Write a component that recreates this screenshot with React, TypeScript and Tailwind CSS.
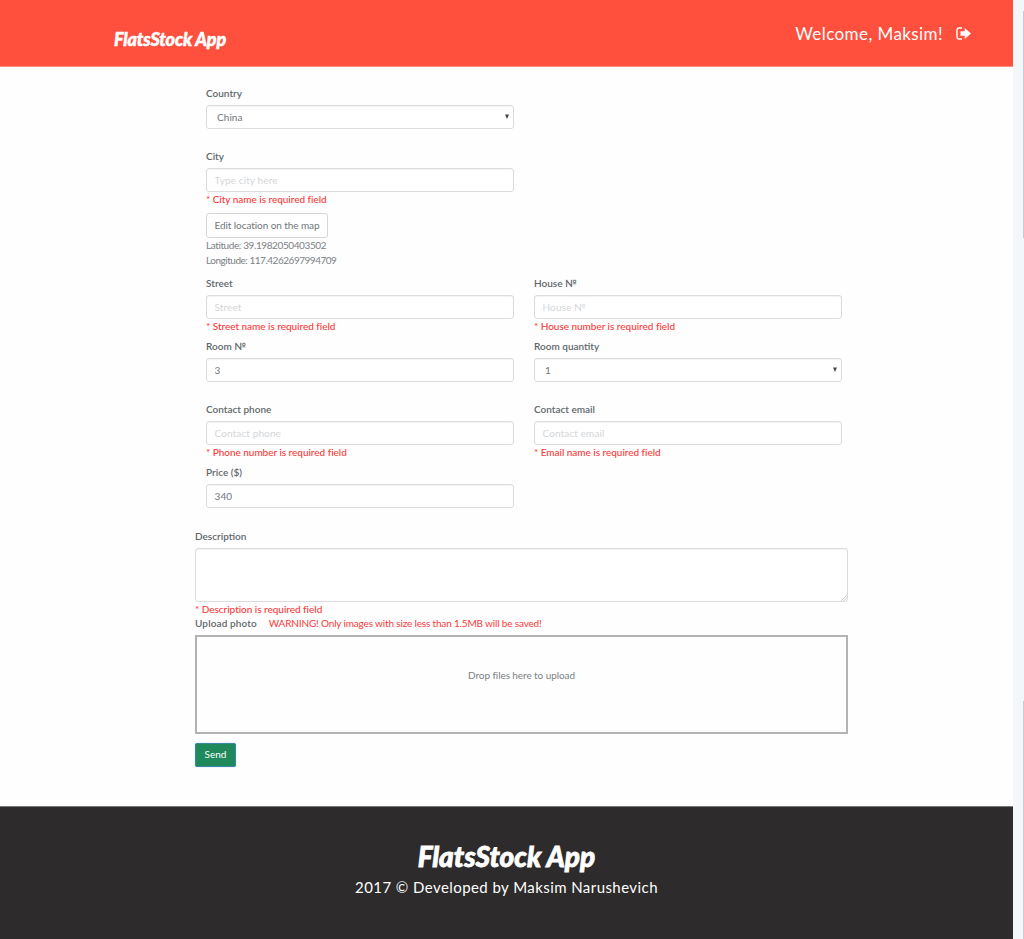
import React from "react";

const inputBox =
  "block h-[24px] w-[308px] rounded-[3px] border border-[#dcdcdc] bg-white px-[7.5px] pb-[1px] text-[10px] tracking-[0.12px] text-[#6f7679] shadow-[inset_0_1px_1px_rgba(0,0,0,0.05)] outline-none placeholder:text-[#d3d6d8]";

function Label({ children }: { children: React.ReactNode }) {
  return (
    <label className="mb-[4px] block h-[14px] text-[10px] leading-[13px] font-semibold whitespace-nowrap text-[#5f686c]">
      {children}
    </label>
  );
}

function ErrorText({ children }: { children: React.ReactNode }) {
  return (
    <p className="h-[14px] text-[10px] leading-[15px] font-medium tracking-[-0.03px] whitespace-nowrap text-[#fb3a3a]">
      {children}
    </p>
  );
}

function TextField(props: { label: string; placeholder?: string; value?: string; error?: string }) {
  return (
    <div className="w-[308px]">
      <Label>{props.label}</Label>
      <input className={inputBox} placeholder={props.placeholder} defaultValue={props.value} />
      {props.error && <ErrorText>{props.error}</ErrorText>}
    </div>
  );
}

function SelectField({ label, value }: { label: string; value: string }) {
  return (
    <div className="w-[308px]">
      <Label>{label}</Label>
      <div className="flex h-[24px] items-center justify-between rounded-[3px] border border-[#dcdcdc] bg-white pr-[4px] pb-[1px] pl-[10px] text-[10px] leading-[14px] tracking-[0.06px] text-[#6f7679] shadow-[inset_0_1px_1px_rgba(0,0,0,0.05)]">
        <span>{value}</span>
        <svg width="4" height="5" viewBox="0 0 4 5">
          <path d="M0 0.5H4L2 5Z" fill="#444" />
        </svg>
      </div>
    </div>
  );
}

export default function App() {
  return (
    <div className="flex h-[939px] w-[1024px] overflow-hidden bg-[#fefefe] font-['Lato','Noto_Sans',sans-serif]">
      <div className="flex w-[1013px] flex-col">
        <header className="flex h-[67px] justify-between border-b border-[#ff8a7c] bg-[#ff4f3d] pr-[42px] pl-[114px] text-white">
          <div className="pt-[27px] text-[18px] leading-[24px] font-black tracking-[-0.15px] whitespace-nowrap italic [-webkit-text-stroke:0.5px_white]">
            FlatsStock App
          </div>
          <div className="flex h-[67px] items-center gap-[13px]">
            <span className="text-[17px] tracking-[0.42px] whitespace-nowrap">Welcome, Maksim!</span>
            <svg width="15" height="13" viewBox="0 0 15 13">
              <path d="M6 1H3.2Q1 1 1 3.2V9.8Q1 12 3.2 12H6" fill="none" stroke="white" strokeWidth="1.4" />
              <path d="M4.5 4.2H8.7V1L15 6.5L8.7 12V8.8H4.5Z" fill="white" />
            </svg>
          </div>
        </header>

        <main className="flex h-[739px] flex-col pt-[20px] pl-[195px]">
          <div className="h-[63px] pl-[11px]">
            <SelectField label="Country" value="China" />
          </div>
          <div className="h-[127px] pl-[11px]">
            <TextField label="City" placeholder="Type city here" error="* City name is required field" />
            <button className="mt-[7px] block h-[25px] w-[122px] rounded-[3px] border border-[#d6d6d6] bg-white pb-[1px] text-[10px] tracking-[-0.08px] whitespace-nowrap text-[#6f7679]">
              Edit location on the map
            </button>
            <p className="text-[10px] leading-[15px] tracking-[-0.4px] whitespace-nowrap text-[#7b8184]">Latitude: 39.1982050403502</p>
            <p className="text-[10px] leading-[15px] tracking-[-0.48px] whitespace-nowrap text-[#7b8184]">Longitude: 117.4262697994709</p>
          </div>
          <div className="flex h-[63px] gap-[20px] pl-[11px]">
            <TextField label="Street" placeholder="Street" error="* Street name is required field" />
            <TextField label="House №" placeholder="House №" error="* House number is required field" />
          </div>
          <div className="flex h-[63px] gap-[20px] pl-[11px]">
            <TextField label="Room №" value="3" />
            <SelectField label="Room quantity" value="1" />
          </div>
          <div className="flex h-[63px] gap-[20px] pl-[11px]">
            <TextField label="Contact phone" placeholder="Contact phone" error="* Phone number is required field" />
            <TextField label="Contact email" placeholder="Contact email" error="* Email name is required field" />
          </div>
          <div className="h-[64px] pl-[11px]">
            <TextField label="Price ($)" value="340" />
          </div>
          <div className="w-[653px]">
            <Label>Description</Label>
            <div className="relative">
              <textarea className="block h-[54px] w-full resize-none rounded-[3px] border border-[#dcdcdc] bg-white shadow-[inset_0_1px_1px_rgba(0,0,0,0.05)] outline-none" />
              <svg className="absolute right-[1px] bottom-[1px]" width="6" height="6" viewBox="0 0 6 6">
                <path d="M0.5 5.5L5.5 0.5M3 5.5L5.5 3" stroke="#999" strokeWidth="0.9" strokeDasharray="1 0.5" />
              </svg>
            </div>
            <ErrorText>* Description is required field</ErrorText>
            <div className="flex h-[19px] gap-[12px] text-[10px] leading-[14px] whitespace-nowrap">
              <span className="font-semibold tracking-[0.12px] text-[#5f686c]">Upload photo</span>
              <span className="tracking-[-0.16px] text-[#fb3a3a]">WARNING! Only images with size less than 1.5MB will be saved!</span>
            </div>
            <div className="h-[99px] border-2 border-[#b3b3b3] pt-[30px] text-center text-[10px] leading-[16px] tracking-[-0.08px] text-[#7b8184]">
              Drop files here to upload
            </div>
            <button className="mt-[9px] block h-[24px] w-[41px] rounded-[2px] border border-[#3d86a6] bg-[#20895c] pb-[1px] text-[10px] text-white shadow-[0_0_1px_#5b9dd9]">
              Send
            </button>
          </div>
        </main>

        <footer className="flex h-[133px] flex-col items-center border-t border-[#777] bg-[#2d2b2b] pt-[30px] text-white">
          <div className="text-[28px] leading-[38px] font-black whitespace-nowrap italic [-webkit-text-stroke:0.8px_white]">FlatsStock App</div>
          <p className="text-[15px] leading-[25px] tracking-[0.43px] whitespace-nowrap">2017 © Developed by Maksim Narushevich</p>
        </footer>
      </div>
      <aside className="flex w-[11px] flex-col items-end bg-[#f3f7fa]">
        <div className="mt-[11px] h-[227px] w-px bg-[#c8cacc]" />
        <div className="mt-[463px] h-[238px] w-px bg-[#c8cacc]" />
      </aside>
    </div>
  );
}
